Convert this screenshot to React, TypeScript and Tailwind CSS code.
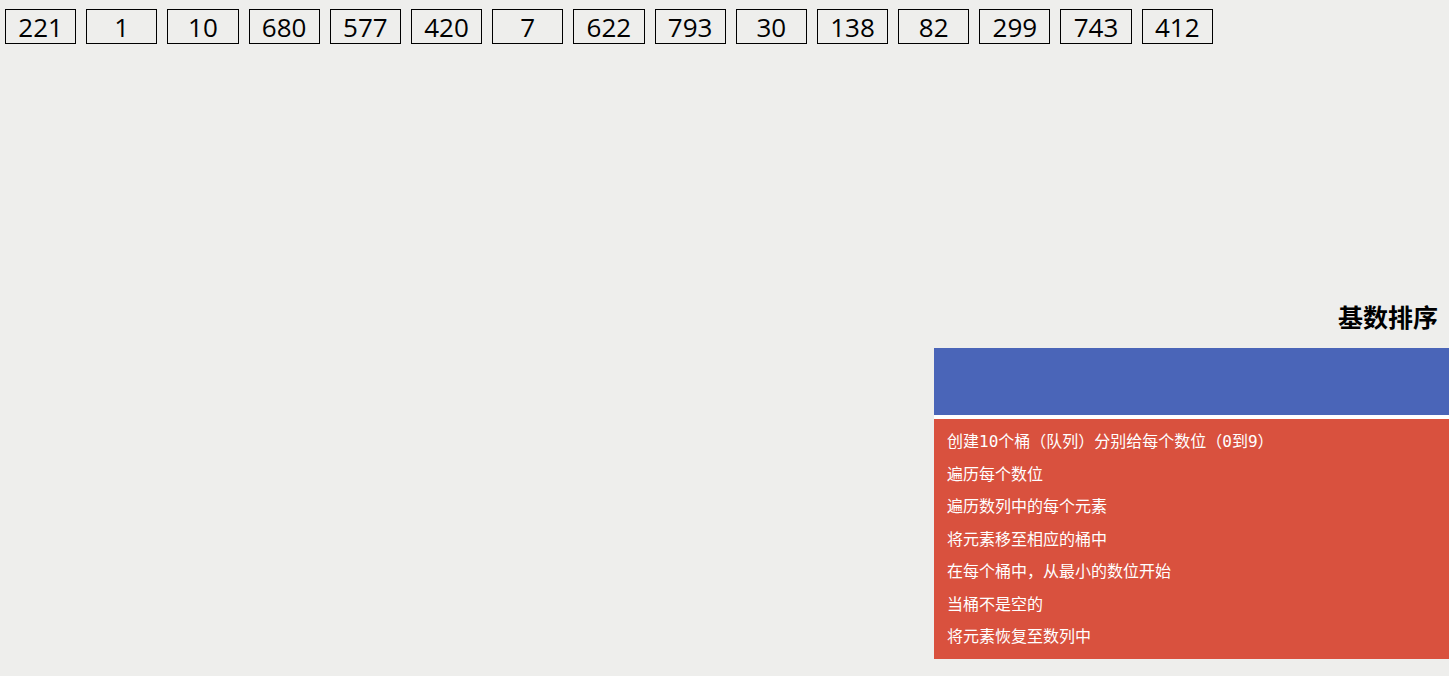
import React from 'react';

const numbers = [221, 1, 10, 680, 577, 420, 7, 622, 793, 30, 138, 82, 299, 743, 412];

const steps = [
  '创建10个桶（队列）分别给每个数位（0到9）',
  '遍历每个数位',
  '遍历数列中的每个元素',
  '将元素移至相应的桶中',
  '在每个桶中，从最小的数位开始',
  '当桶不是空的',
  '将元素恢复至数列中'
];

const NumberBox: React.FC<{ value: number }> = ({ value }) => (
  <div className="w-[71.2px] h-[35px] border border-black flex items-center justify-center text-[26px] leading-none text-black">
    {value}
  </div>
);

export default function App() {
  return (
    <div
      className="min-h-screen bg-[#eeeeec] flex flex-col"
      style={{ fontFamily: '"Open Sans", "Noto Sans CJK SC", sans-serif' }}
    >
      <div className="flex gap-[10px] pl-[5px] pt-[9px]">
        {numbers.map((n, i) => (
          <NumberBox key={i} value={n} />
        ))}
      </div>

      <div className="flex flex-col items-end mt-[256px]">
        <h1
          className="text-[25px] font-bold leading-[32px] pr-[11px] text-black"
          style={{ fontFamily: '"Noto Sans CJK SC", sans-serif' }}
        >
          基数排序
        </h1>
        <div className="w-[515px] mt-[16px]">
          <div className="h-[67px] bg-[#4a65b8]" />
          <div className="h-[4px] bg-white" />
          <div
            className="h-[240px] bg-[#d9513e] pt-[7px] pl-[13px] text-white text-[16px]"
            style={{ fontFamily: '"DejaVu Sans Mono", "Noto Sans CJK SC", monospace' }}
          >
            {steps.map((s) => (
              <div key={s} className="leading-[32.5px]">
                {s}
              </div>
            ))}
          </div>
        </div>
      </div>
    </div>
  );
}
